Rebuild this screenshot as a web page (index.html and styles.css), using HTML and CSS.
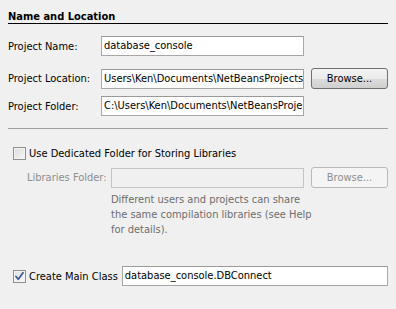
FILE: index.html
```html
<!DOCTYPE html>
<html>
<head>
<meta charset="utf-8">
<link rel="stylesheet" href="styles.css">
</head>
<body>
<div class="panel">
  <div class="heading">Name and Location</div>

  <div class="row r-name">
    <span class="lbl">Project Name:</span>
    <div class="field">database_console</div>
  </div>

  <div class="row r-loc">
    <span class="lbl">Project Location:</span>
    <div class="field">Users\Ken\Documents\NetBeansProjects</div>
    <button class="btn">Browse...</button>
  </div>

  <div class="row r-folder">
    <span class="lbl">Project Folder:</span>
    <div class="field">C:\Users\Ken\Documents\NetBeansProje</div>
  </div>

  <div class="sep"></div>

  <div class="row r-chk">
    <span class="cb"></span>
    <span class="cbl">Use Dedicated Folder for Storing Libraries</span>
  </div>

  <div class="row r-lib">
    <span class="lbl lbl-lib dis">Libraries Folder:</span>
    <div class="field field-lib dis"></div>
    <button class="btn dis">Browse...</button>
  </div>

  <div class="help">Different users and projects can share<br>the same compilation libraries (see Help<br>for details).</div>

  <div class="row r-main">
    <span class="cb checked"><svg width="11" height="11" viewBox="0 0 11 11"><path d="M2 5.5 L4.3 8.3 L9 1.8" fill="none" stroke="#3d5a9a" stroke-width="1.8" stroke-linejoin="round" stroke-linecap="round"/></svg></span>
    <span class="cbl main-lbl">Create Main Class</span>
    <div class="field field-main">database_console.DBConnect</div>
  </div>
</div>
</body>
</html>
```

FILE: styles.css
```css
html, body {
  margin: 0;
  padding: 0;
  background: #f0f0f0;
}
body {
  width: 396px;
  height: 309px;
  overflow: hidden;
  font-family: "DejaVu Sans Condensed", "DejaVu Sans", sans-serif;
  font-size: 11px;
  color: #000;
}
.panel {
  padding: 0 8px;
}
.heading {
  margin-top: 10px;
  height: 13px;
  line-height: 13px;
  font-weight: bold;
  border-bottom: 1px solid #000;
}
.row {
  display: flex;
  align-items: center;
}
.lbl {
  width: 93px;
  flex: none;
  white-space: nowrap;
}
.field {
  box-sizing: border-box;
  width: 203px;
  height: 20px;
  line-height: 18px;
  padding-left: 2px;
  border: 1px solid #a7a7a7;
  border-top-color: #9a9a9a;
  background: #fff;
  white-space: nowrap;
  overflow: hidden;
  flex: none;
}
.btn {
  box-sizing: border-box;
  margin-left: 7px;
  width: 77px;
  height: 21px;
  padding: 0;
  font: inherit;
  color: #000;
  border: 1px solid #707070;
  border-radius: 3px;
  background: linear-gradient(#f3f3f3, #ebebeb 50%, #dddddd 51%, #cfcfcf);
  flex: none;
}
.r-name { margin-top: 12px; }
.r-loc { margin-top: 12px; height: 21px; }
.r-folder { margin-top: 7px; }
.sep {
  margin-top: 12px;
  height: 1px;
  background: #a0a0a0;
}
.r-chk { margin-top: 18px; height: 13px; }
.cb {
  box-sizing: border-box;
  width: 13px;
  height: 13px;
  margin-left: 5px;
  border: 1px solid #8e8f8f;
  background: linear-gradient(135deg, #dcdcdc, #f6f6f6);
  box-shadow: inset 0 0 0 1px #f4f4f4;
  flex: none;
  display: flex;
  align-items: center;
  justify-content: center;
}
.cb.checked {
  background: linear-gradient(135deg, #e0e0e0, #fafafa);
}
.cbl {
  margin-left: 3px;
  white-space: nowrap;
  flex: none;
}
.r-lib { margin-top: 7px; height: 21px; }
.lbl-lib {
  width: 84px;
  padding-left: 19px;
}
.dis {
  color: #8d8d8d;
}
.field-lib {
  width: 193px;
  background: #f0f0f0;
  border-color: #c4c4c4;
}
.btn.dis {
  border-color: #b9b9b9;
  background: #f4f4f4;
  color: #8d8d8d;
}
.help {
  margin-top: 4px;
  margin-left: 103px;
  line-height: 15px;
  color: #6d6d6d;
}
.r-main { margin-top: 29px; height: 20px; }
.main-lbl {
  margin-right: 4px;
}
.field-main {
  flex: 1 1 auto;
  width: auto;
}
```
